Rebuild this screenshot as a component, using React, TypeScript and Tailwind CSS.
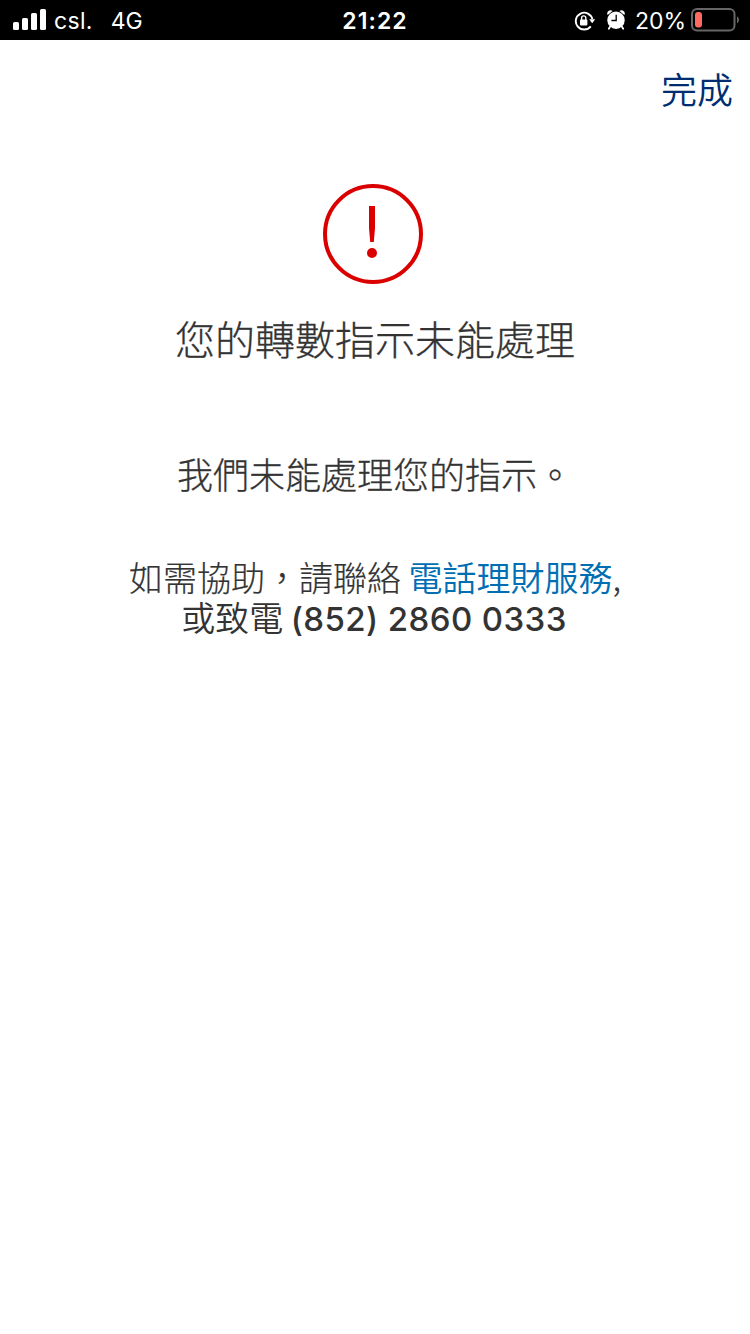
import React from 'react';
const SignalIcon: React.FC = () => <svg width="34" height="22" viewBox="0 0 34 22" fill="#fff">
    <rect x="0" y="13" width="6" height="8" rx="1.5" />
    <rect x="9" y="9" width="6" height="12" rx="1.5" />
    <rect x="18" y="4" width="6" height="17" rx="1.5" />
    <rect x="27" y="0" width="6" height="21" rx="1.5" />
  </svg>;
const RotationLockIcon: React.FC = () => <svg width="22" height="20" viewBox="0 0 22 20" fill="none">
    <path d="M16.8 15.3A8.4 8.4 0 1 1 18.4 8.3" stroke="#fff" strokeWidth="1.9" />
    <path d="M15.2 8.2h6l-3 4z" fill="#fff" />
    <rect x="6" y="8.6" width="7.4" height="5.8" rx="0.8" fill="#fff" />
    <path d="M7.6 9.4V7a2.1 2.1 0 0 1 4.2 0v2.4" stroke="#fff" strokeWidth="1.4" />
  </svg>;
const AlarmIcon: React.FC = () => <svg width="18" height="20" viewBox="0 0 18 20" fill="none">
    <circle cx="9" cy="10.2" r="8.7" fill="#fff" />
    <path d="M0.6 5C-1 2 2.4 -1 5.6 0.9zM17.4 5C19 2 15.6 -1 12.4 0.9z" fill="#fff" />
    <path d="M3.2 16.6L1.8 18.7M14.8 16.6l1.4 2.1" stroke="#fff" strokeWidth="1.8" strokeLinecap="round" />
    <path d="M9.2 4.8v5.7H4.4" stroke="#000" strokeWidth="1.3" />
  </svg>;
const BatteryIcon: React.FC = () => <svg width="49" height="24" viewBox="0 0 49 24" fill="none">
    <rect x="1" y="1" width="42.5" height="21.5" rx="5" stroke="#666" strokeWidth="2" />
    <rect x="4" y="4" width="7" height="15.5" rx="3" fill="#ff6961" />
    <path d="M46 8.2c2.6 1.5 2.6 5.6 0 7.1z" fill="#666" />
  </svg>;
const ErrorIcon: React.FC = () => <svg width="100" height="100" viewBox="0 0 100 100" fill="none">
    <circle cx="50" cy="50" r="48" stroke="#db0000" strokeWidth="4" />
    <path d="M46 22h6v22l-1.2 14h-3.6L46 44z" fill="#db0000" />
    <circle cx="49" cy="69" r="5" fill="#db0000" />
  </svg>;
const StatusBar: React.FC = () => <header className="grid h-10 grid-cols-[1fr_auto_1fr] items-center bg-black font-['Inter',sans-serif] text-[23px] text-white">
    <div className="flex items-center pl-[13px]">
      <SignalIcon />
      <span className="ml-[7px] pt-0.5 tracking-[0.3px]">csl.</span>
      <span className="ml-[18px] pt-0.5">4G</span>
    </div>
    <span className="pt-0.5 font-semibold tracking-[1.1px]">21:22</span>
    <div className="flex items-center justify-end pr-[10px]">
      <span className="pt-0.5"><RotationLockIcon /></span>
      <span className="ml-[11px]"><AlarmIcon /></span>
      <span className="ml-[10px] pt-0.5">20%</span>
      <span className="ml-[5px]"><BatteryIcon /></span>
    </div>
  </header>;
const App: React.FC = () => {
  return <div className="min-h-screen bg-white font-['Noto_Sans_CJK_TC',sans-serif] text-[#333]" lang="zh-Hant">
      <StatusBar />
      <div className="flex h-24 justify-end pr-[17px]">
        <button className="text-[36px] leading-24 font-[350] text-[#002d72]">完成</button>
      </div>
      <main className="flex flex-col items-center pt-12">
        <div className="mr-1">
          <ErrorIcon />
        </div>
        <h1 className="mt-6 text-[40px] leading-[60px] font-light [-webkit-text-stroke:0.3px]">
          您的轉數指示未能處理
        </h1>
        <p className="mt-[79px] text-[36px] leading-[52px] font-light [-webkit-text-stroke:0.3px]">
          我們未能處理您的指示。
        </p>
        {/* Phone banking contact */}
        <div className="mt-[58px] text-center text-[34px] leading-10">
          <p className="font-light [-webkit-text-stroke:0.2px]">
            如需協助，請聯絡 <a href="#" className="font-[350] text-[#006eb3] [-webkit-text-stroke:0px]">電話理財服務</a>,
          </p>
          <p className="pr-0.5 font-[350]">
            或致電 <span className="font-['Inter',sans-serif] text-[33px] font-[550] tracking-[0.4px]">(852) 2860 0333</span>
          </p>
        </div>
      </main>
    </div>;
};
export default App;
